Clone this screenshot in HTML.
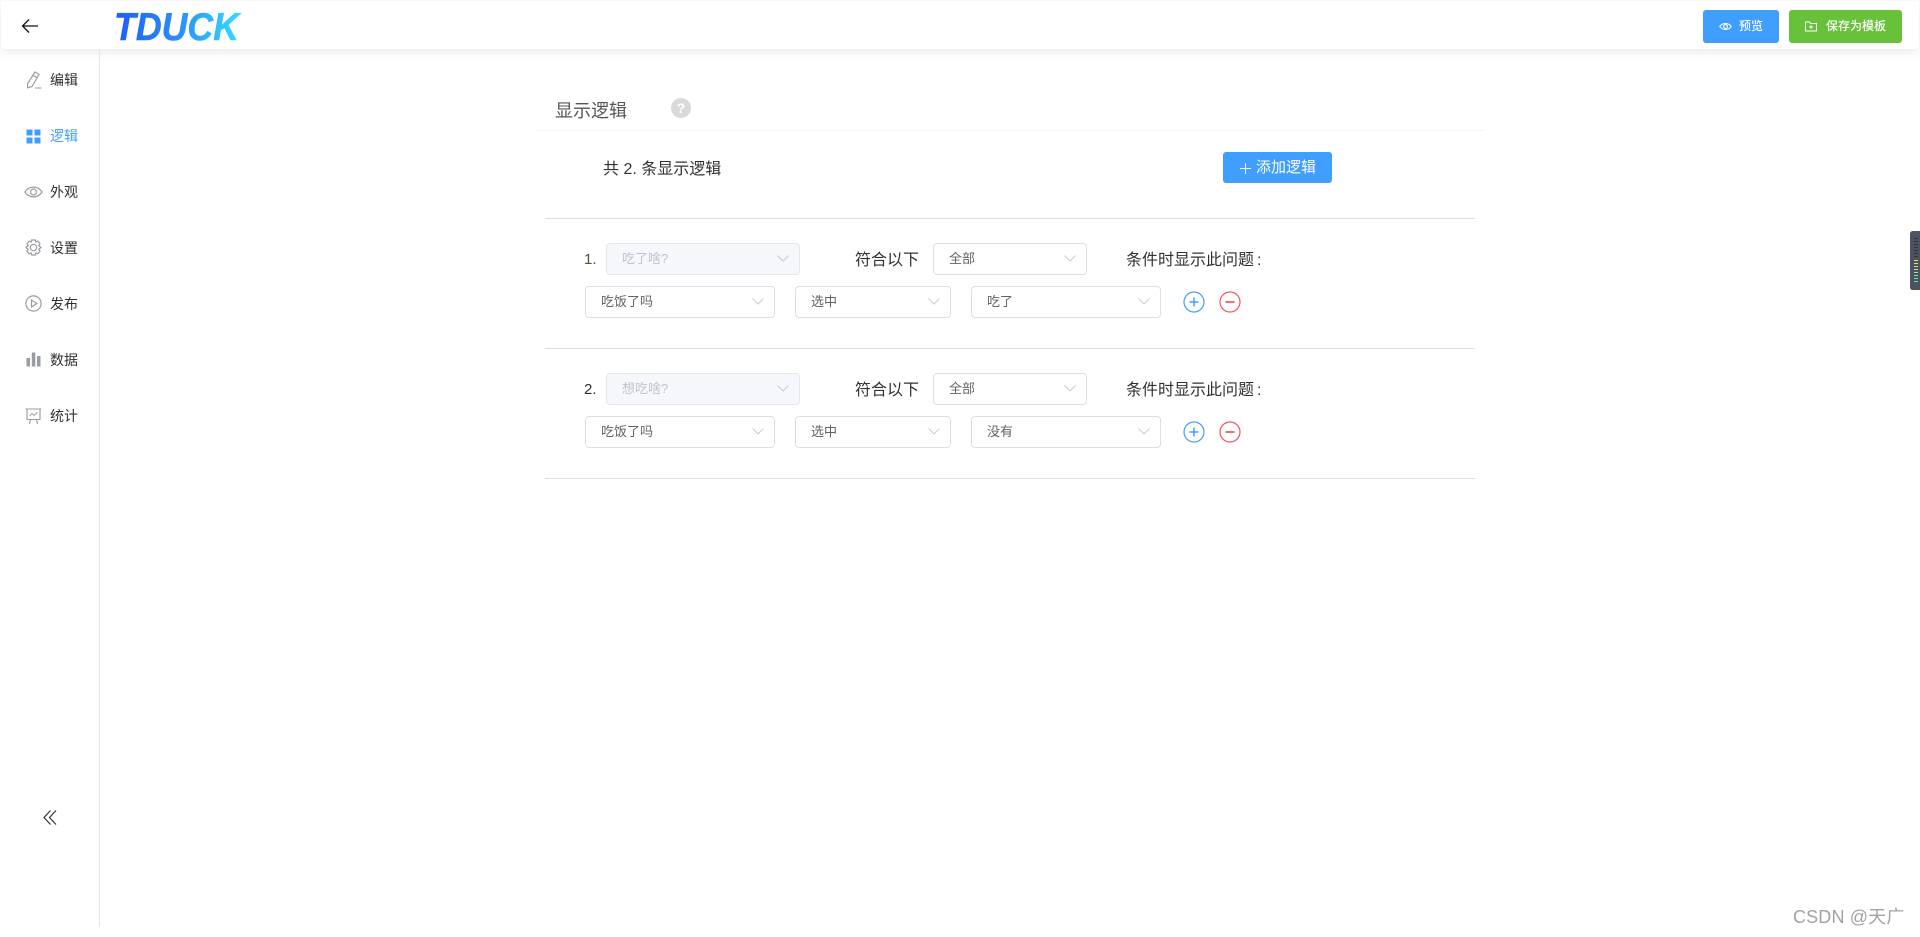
<!DOCTYPE html>
<html lang="zh"><head><meta charset="utf-8"><title>TDUCK</title>
<style>
*{box-sizing:border-box}
html,body{margin:0;padding:0;width:1920px;height:937px;overflow:hidden;background:#fff;font-family:"Liberation Sans","Noto Sans CJK SC",sans-serif;color:#303133}
.a{position:absolute;white-space:nowrap}
.hdr{left:1px;top:1px;width:1918px;height:48px;background:#fff;border-radius:4px;box-shadow:0 2px 10px rgba(60,70,110,.14)}
.side{left:99px;top:49px;width:1px;height:878px;background:#e4e6ea}
.mi{left:50px;font-size:14px;line-height:20px;color:#303133}
.btn{color:#fff;border-radius:3px;font-size:12px;height:33px;line-height:33px}
.line{left:545px;width:930px;height:1px;background:#dcdfe6}
.sel{height:32px;border:1px solid #dcdfe6;border-radius:4px;background:#fff;font-size:13px;line-height:30px;color:#606266;padding-left:15px}
.sel.dis{background:#f5f7fa;border-color:#e4e7ed;color:#c0c4cc}
.sel svg{position:absolute;right:9px;top:10px}
.t16{font-size:16px;line-height:24px;color:#303133}
</style></head><body>

<div class="a hdr"></div>
<svg class="a" style="left:21px;top:18px" width="18" height="16" viewBox="0 0 18 16" fill="none" stroke="#111" stroke-width="1.3"><path d="M1.500 8H17M8 1.500 1.500 8 8 14.500"/></svg>
<svg class="a" style="left:105px;top:4px" width="150" height="44" viewBox="0 0 150 44"><defs><linearGradient id="lg" gradientUnits="userSpaceOnUse" x1="10" y1="0" x2="135" y2="0"><stop offset="0" stop-color="#1d5ff5"/><stop offset=".5" stop-color="#2a8df5"/><stop offset="1" stop-color="#35dbff"/></linearGradient></defs><text x="9" y="36" font-family="Liberation Sans" font-weight="bold" font-style="italic" font-size="39" textLength="125" lengthAdjust="spacingAndGlyphs" fill="url(#lg)" stroke="url(#lg)" stroke-width=".5">TDUCK</text></svg>

<div class="a btn" style="left:1703px;top:10px;width:76px;background:#409eff"></div>
<svg class="a" style="left:1719px;top:21px" width="13" height="11" viewBox="0 0 13 11" fill="none" stroke="#fff" stroke-width="1.100"><path d="M.8 5.500C3.500 1.500 9.500 1.500 12.200 5.500 9.500 9.500 3.500 9.500 .8 5.500Z"/><circle cx="6.500" cy="5.500" r="1.900"/></svg>
<div class="a btn" style="left:1739px;top:10px;font-weight:500">预览</div>
<div class="a btn" style="left:1789px;top:10px;width:113px;background:#67c23a"></div>
<svg class="a" style="left:1805px;top:21px" width="12" height="11" viewBox="0 0 12 11" fill="none" stroke="#fff" stroke-width="1"><path d="M.5 1H4.500L5.500 2.500H11.500V10H.5ZM4 6H8M6 4.300V7.700"/></svg>
<div class="a btn" style="left:1826px;top:10px;font-weight:500">保存为模板</div>

<div class="a side"></div>

<svg class="a" style="left:25px;top:71px" width="17" height="18" viewBox="0 0 17 18" fill="none" stroke="#999ca3" stroke-width="1.200"><path d="M10 1 14 3.500 7 15.500 2.500 16.800 2.600 12.500ZM8.300 4.500 12 6.800"/><path d="M10 17H16.500" stroke-width="1"/></svg>
<div class="a mi" style="top:70px">编辑</div>

<svg class="a" style="left:26px;top:129px" width="15" height="15" viewBox="0 0 15 15" fill="#409eff"><rect x="0.500" y="0.500" width="6" height="6"/><rect x="8.500" y="0.500" width="6" height="6"/><rect x="0.500" y="8.500" width="6" height="6"/><rect x="8.500" y="8.500" width="6" height="6"/></svg>
<div class="a mi" style="top:126px;color:#409eff">逻辑</div>

<svg class="a" style="left:24px;top:185px" width="19" height="14" viewBox="0 0 19 14" fill="none" stroke="#999ca3" stroke-width="1.200"><path d="M1 7C5 .5 14 .5 18 7 14 13.500 5 13.500 1 7Z"/><circle cx="9.500" cy="7" r="3"/></svg>
<div class="a mi" style="top:182px">外观</div>

<svg class="a" style="left:25px;top:239px" width="17" height="17" viewBox="0 0 17 17" fill="none" stroke="#999ca3" stroke-width="1.200"><path d="M6.700 1H10.300L10.800 3 12.800 2.200 15 4.800 13.800 6.600 16 8.500 13.800 10.400 15 12.200 12.800 14.800 10.800 14 10.300 16H6.700L6.200 14 4.200 14.800 2 12.200 3.200 10.400 1 8.500 3.200 6.600 2 4.800 4.200 2.200 6.200 3Z"/><circle cx="8.500" cy="8.500" r="3.200"/></svg>
<div class="a mi" style="top:238px">设置</div>

<svg class="a" style="left:25px;top:295px" width="17" height="17" viewBox="0 0 17 17" fill="none" stroke="#999ca3" stroke-width="1.200"><circle cx="8.500" cy="8.500" r="7.600"/><path d="M6.500 5V12L11.800 8.500Z"/></svg>
<div class="a mi" style="top:294px">发布</div>

<svg class="a" style="left:26px;top:352px" width="15" height="15" viewBox="0 0 15 15" fill="#999ca3"><rect x="0.500" y="6" width="3.500" height="8.500"/><rect x="5.800" y="0.500" width="3.500" height="14"/><rect x="11" y="4" width="3.500" height="10.500"/></svg>
<div class="a mi" style="top:350px">数据</div>

<svg class="a" style="left:25px;top:408px" width="17" height="17" viewBox="0 0 17 17" fill="none" stroke="#999ca3" stroke-width="1.100"><path d="M.5 1H16.500M2 1V11.500H15V1M5.500 11.500 4.500 16M11.500 11.500 12.500 16"/><path d="M4.500 8 7 5.500 9 7.500 12.500 4" stroke-width=".9"/></svg>
<div class="a mi" style="top:406px">统计</div>

<svg class="a" style="left:42px;top:809px" width="16" height="17" viewBox="0 0 16 17" fill="none" stroke="#3a3030" stroke-width="1.200"><path d="M8.500 1.500 2 8.500 8.500 15.500M14 1.500 7.500 8.500 14 15.500"/></svg>

<div class="a" style="left:555px;top:98px;font-size:18px;line-height:26px;color:#555">显示逻辑</div>
<svg class="a" style="left:671px;top:98px" width="20" height="20" viewBox="0 0 20 20"><circle cx="10" cy="10" r="10" fill="#d9d9d9"/><text x="10" y="15" text-anchor="middle" font-family="Liberation Sans" font-weight="bold" font-size="14" fill="#fff">?</text></svg>
<div class="a" style="left:535px;top:130px;width:950px;height:1px;background:#f5f5f5"></div>

<div class="a t16" style="left:603px;top:158px">共 2. 条显示逻辑</div>
<div class="a" style="left:1223px;top:152px;width:109px;height:31px;background:#409eff;border-radius:3px"></div>
<svg class="a" style="left:1240px;top:163px" width="11" height="11" viewBox="0 0 11 11" stroke="#fff" stroke-width="1"><path d="M5.500 0V11M0 5.500H11"/></svg>
<div class="a" style="left:1256px;top:157px;font-size:15px;line-height:22px;color:#fff">添加逻辑</div>

<div class="a line" style="top:218px"></div>

<!-- row 1 -->
<div class="a t16" style="left:584px;top:248px;font-size:15px;color:#5a4a3a">1.</div>
<div class="a sel dis" style="left:606px;top:243px;width:194px">吃了啥?<svg width="14" height="9" viewBox="0 0 14 9" fill="none" stroke="#c8ccd3" stroke-width="1"><path d="M1.500 1.500 7 7 12.500 1.500"/></svg></div>
<div class="a t16" style="left:855px;top:249px">符合以下</div>
<div class="a sel" style="left:933px;top:243px;width:154px">全部<svg width="14" height="9" viewBox="0 0 14 9" fill="none" stroke="#c8ccd3" stroke-width="1"><path d="M1.500 1.500 7 7 12.500 1.500"/></svg></div>
<div class="a t16" style="left:1126px;top:249px">条件时显示此问题<span style="margin-left:3px">:</span></div>
<div class="a sel" style="left:585px;top:286px;width:190px">吃饭了吗<svg width="14" height="9" viewBox="0 0 14 9" fill="none" stroke="#c8ccd3" stroke-width="1"><path d="M1.500 1.500 7 7 12.500 1.500"/></svg></div>
<div class="a sel" style="left:795px;top:286px;width:156px">选中<svg width="14" height="9" viewBox="0 0 14 9" fill="none" stroke="#c8ccd3" stroke-width="1"><path d="M1.500 1.500 7 7 12.500 1.500"/></svg></div>
<div class="a sel" style="left:971px;top:286px;width:190px">吃了<svg width="14" height="9" viewBox="0 0 14 9" fill="none" stroke="#c8ccd3" stroke-width="1"><path d="M1.500 1.500 7 7 12.500 1.500"/></svg></div>
<svg class="a" style="left:1183px;top:291px" width="22" height="22" viewBox="0 0 22 22" fill="none" stroke="#409eff"><circle cx="11" cy="11" r="10" stroke-width="1.200"/><path d="M6.500 11H15.500M11 6.500V15.500" stroke-width="1.500"/></svg>
<svg class="a" style="left:1219px;top:291px" width="22" height="22" viewBox="0 0 22 22" fill="none"><circle cx="11" cy="11" r="10" stroke-width="1.200" stroke="#f5525c"/><path d="M6.500 11H15.500" stroke-width="1.700" stroke="#f5525c"/></svg>

<div class="a line" style="top:348px"></div>

<!-- row 2 -->
<div class="a t16" style="left:584px;top:378px;font-size:15px">2.</div>
<div class="a sel dis" style="left:606px;top:373px;width:194px">想吃啥?<svg width="14" height="9" viewBox="0 0 14 9" fill="none" stroke="#c8ccd3" stroke-width="1"><path d="M1.500 1.500 7 7 12.500 1.500"/></svg></div>
<div class="a t16" style="left:855px;top:379px">符合以下</div>
<div class="a sel" style="left:933px;top:373px;width:154px">全部<svg width="14" height="9" viewBox="0 0 14 9" fill="none" stroke="#c8ccd3" stroke-width="1"><path d="M1.500 1.500 7 7 12.500 1.500"/></svg></div>
<div class="a t16" style="left:1126px;top:379px">条件时显示此问题<span style="margin-left:3px">:</span></div>
<div class="a sel" style="left:585px;top:416px;width:190px">吃饭了吗<svg width="14" height="9" viewBox="0 0 14 9" fill="none" stroke="#c8ccd3" stroke-width="1"><path d="M1.500 1.500 7 7 12.500 1.500"/></svg></div>
<div class="a sel" style="left:795px;top:416px;width:156px">选中<svg width="14" height="9" viewBox="0 0 14 9" fill="none" stroke="#c8ccd3" stroke-width="1"><path d="M1.500 1.500 7 7 12.500 1.500"/></svg></div>
<div class="a sel" style="left:971px;top:416px;width:190px">没有<svg width="14" height="9" viewBox="0 0 14 9" fill="none" stroke="#c8ccd3" stroke-width="1"><path d="M1.500 1.500 7 7 12.500 1.500"/></svg></div>
<svg class="a" style="left:1183px;top:421px" width="22" height="22" viewBox="0 0 22 22" fill="none" stroke="#409eff"><circle cx="11" cy="11" r="10" stroke-width="1.200"/><path d="M6.500 11H15.500M11 6.500V15.500" stroke-width="1.500"/></svg>
<svg class="a" style="left:1219px;top:421px" width="22" height="22" viewBox="0 0 22 22" fill="none"><circle cx="11" cy="11" r="10" stroke-width="1.200" stroke="#f5525c"/><path d="M6.500 11H15.500" stroke-width="1.700" stroke="#f5525c"/></svg>

<div class="a line" style="top:478px"></div>

<!-- right widget -->
<svg class="a" style="left:1910px;top:231px" width="10" height="59" viewBox="0 0 10 59"><path d="M10 0H3Q0 0 0 3V56Q0 59 3 59H10Z" fill="#4c5262"/>
<g fill="#2f3440"><rect x="4" y="7" width="4" height="1"/><rect x="4" y="10" width="4" height="1"/><rect x="4" y="13" width="4" height="1"/><rect x="4" y="16" width="4" height="1"/><rect x="4" y="19" width="4" height="1"/><rect x="4" y="22" width="4" height="1"/><rect x="4" y="25" width="4" height="1"/></g>
<rect x="4" y="29" width="4" height="1" fill="#e8e84a"/><rect x="4" y="32" width="4" height="1" fill="#d8ee55"/><rect x="4" y="35" width="4" height="1" fill="#c0f060"/><rect x="4" y="38" width="4" height="1" fill="#a8f070"/><rect x="4" y="41" width="4" height="1" fill="#90f080"/><rect x="4" y="44" width="4" height="1" fill="#70f090"/><rect x="4" y="47" width="4" height="1" fill="#55efa5"/><rect x="4" y="50" width="4" height="1" fill="#45edb5"/></svg>

<div class="a" style="left:1793px;top:906px;font-size:18px;line-height:22px;color:#a3a3a3;letter-spacing:.15px">CSDN @天广</div>

</body></html>
